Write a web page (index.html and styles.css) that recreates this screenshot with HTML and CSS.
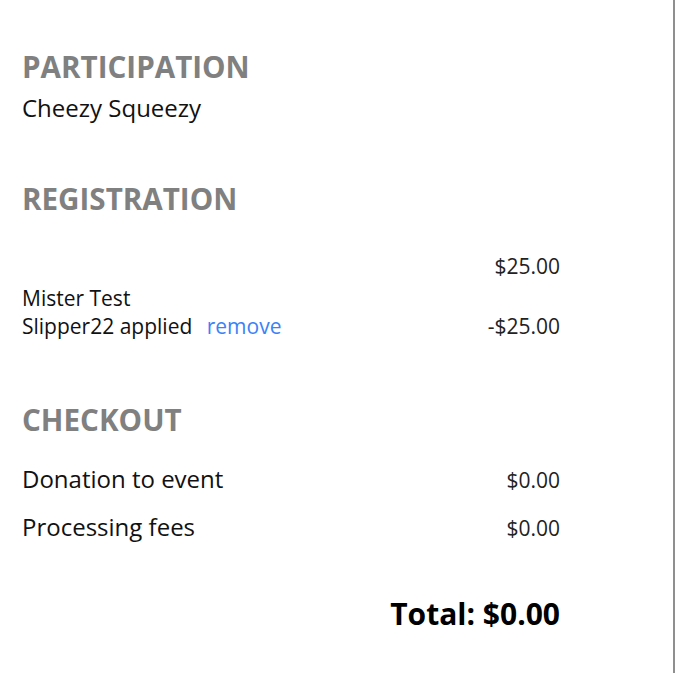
FILE: index.html
```html
<!DOCTYPE html>
<html lang="en">
<head>
    <meta charset="UTF-8">
    <title>Checkout</title>
    <link rel="stylesheet" href="styles.css">
</head>
<body>
    <div class="panel">
        <!-- Participation -->
        <div class="section">
            <h2 class="section-title">PARTICIPATION</h2>
            <div class="event-name">Cheezy Squeezy</div>
        </div>

        <!-- Registration -->
        <div class="section registration">
            <h2 class="section-title">REGISTRATION</h2>
            <div class="reg-price amount">$25.00</div>
            <div class="reg-row">
                <div class="reg-name">Mister Test</div>
            </div>
            <div class="reg-row">
                <div class="reg-coupon">Slipper22 applied <a href="#" class="remove">remove</a></div>
                <div class="amount">-$25.00</div>
            </div>
        </div>

        <!-- Checkout -->
        <div class="section checkout">
            <h2 class="section-title">CHECKOUT</h2>
            <div class="line-item first">
                <span class="label">Donation to event</span>
                <span class="amount">$0.00</span>
            </div>
            <div class="line-item">
                <span class="label">Processing fees</span>
                <span class="amount">$0.00</span>
            </div>
            <div class="total">Total: $0.00</div>
        </div>
    </div>
</body>
</html>
```

FILE: styles.css
```css
body {
    margin: 0;
    font-family: "Open Sans", sans-serif;
    color: #111;
    background: #fff;
}

.panel {
    width: 675px;
    height: 673px;
    box-sizing: border-box;
    padding: 47px 113px 0 22px;
    border-right: 2px solid #8f8f8f;
}

.section-title {
    margin: 0;
    font-size: 29.6px;
    font-weight: 700;
    line-height: 40px;
    color: #808080;
}

.amount {
    color: #222;
    font-size: 21px;
}

/* participation */
.event-name {
    margin-top: 6px;
    font-size: 24px;
    line-height: 30px;
}

/* registration */
.registration {
    margin-top: 56px;
}

.reg-price {
    margin: 33px 0 4px;
    text-align: right;
    line-height: 28px;
}

.reg-row {
    display: flex;
    justify-content: space-between;
    font-size: 21px;
    line-height: 28px;
}

.remove {
    color: #3b82f6;
    text-decoration: none;
    margin-left: 9px;
}

/* checkout */
.checkout {
    margin-top: 60px;
}

.line-item {
    display: flex;
    justify-content: space-between;
    align-items: baseline;
    height: 48px;
    line-height: 48px;
}

.line-item.first {
    margin-top: 15px;
}

.line-item .label {
    font-size: 24px;
}

.total {
    margin-top: 43px;
    text-align: right;
    font-size: 30px;
    font-weight: 700;
    line-height: 40px;
    color: #000;
}
```
